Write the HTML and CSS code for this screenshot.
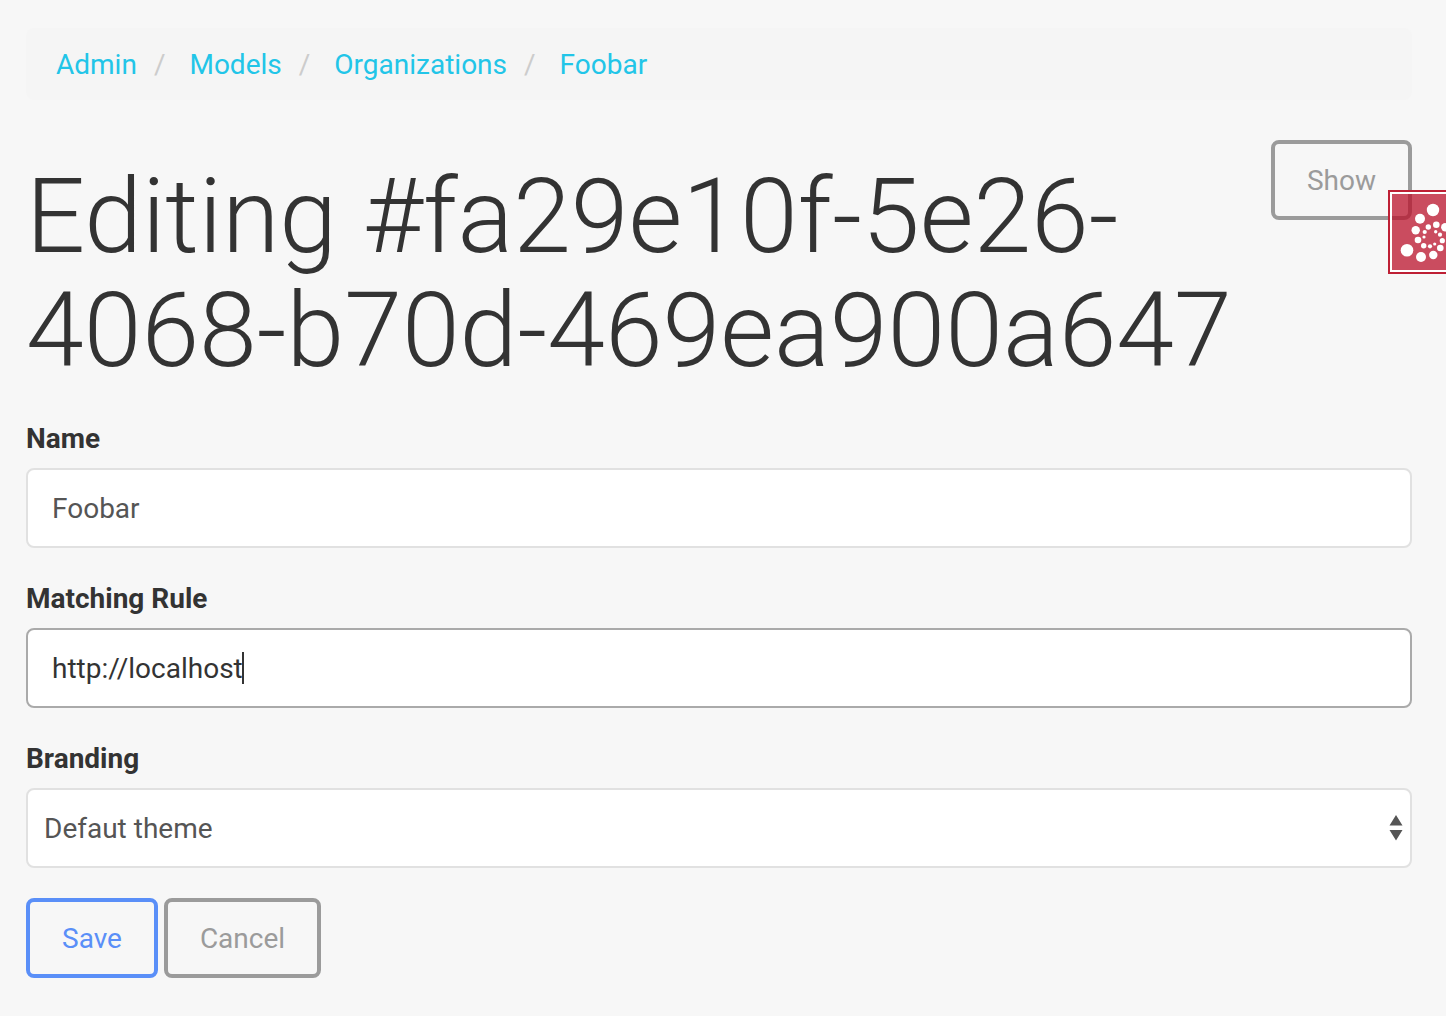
FILE: index.html
```html
<!DOCTYPE html>
<html lang="en">
<head>
<meta charset="utf-8">
<meta name="viewport" content="width=device-width, initial-scale=1">
<title>Editing organization</title>
<link rel="stylesheet" href="styles.css">
</head>
<body>
<main class="page">
  <nav aria-label="Breadcrumb">
    <ol class="breadcrumb">
      <li><a href="#">Admin</a></li>
      <li><a href="#">Models</a></li>
      <li><a href="#">Organizations</a></li>
      <li><a href="#">Foobar</a></li>
    </ol>
  </nav>
  <header class="heading">
    <h1>Editing #fa29e10f-5e26-4068-b70d-469ea900a647</h1>
    <button type="button" class="btn">Show</button>
  </header>
  <form>
    <div class="field">
      <label for="name">Name</label>
      <input class="control" id="name" type="text" value="Foobar">
    </div>
    <div class="field">
      <label for="rule">Matching Rule</label>
      <div class="control-wrap">
        <input class="control active" id="rule" type="text" value="http://localhost">
        <span class="caret"></span>
      </div>
    </div>
    <div class="field">
      <label for="branding">Branding</label>
      <div class="control-wrap">
        <select class="control" id="branding"><option>Defaut theme</option></select>
        <svg class="arrows" viewBox="0 0 14 26" aria-hidden="true"><path d="M7 0l6.500 10.500H.5zM.5 15h13L7 25.500z"/></svg>
      </div>
    </div>
    <div class="actions">
      <button type="button" class="btn btn-primary">Save</button>
      <button type="button" class="btn">Cancel</button>
    </div>
  </form>
</main>
<div class="badge-rail">
  <div class="badge">
    <svg viewBox="0 0 76 76" aria-hidden="true">
      <circle cx="41" cy="16" r="6.200"/><circle cx="28" cy="24.700" r="5"/>
      <circle cx="23.700" cy="36.300" r="4.200"/><circle cx="26" cy="46" r="3.300"/>
      <circle cx="31.700" cy="51.700" r="2.700"/><circle cx="38" cy="52.300" r="2.100"/>
      <circle cx="42.700" cy="50" r="1.600"/><circle cx="15" cy="56.300" r="6.300"/>
      <circle cx="29" cy="63" r="5"/><circle cx="41.300" cy="61" r="4.200"/>
      <circle cx="48.300" cy="54" r="3.300"/><circle cx="50.300" cy="46.700" r="2.600"/>
      <circle cx="48" cy="40.700" r="2.100"/><circle cx="43.700" cy="37.700" r="1.700"/>
      <circle cx="32" cy="43" r="1.600"/><circle cx="32.700" cy="38" r="2.100"/>
      <circle cx="36.300" cy="33" r="2.700"/><circle cx="44.300" cy="30.700" r="3.300"/>
      <circle cx="53.300" cy="33.300" r="4.200"/>
    </svg>
  </div>
</div>
</body>
</html>
```
FILE: styles.css
```css
* { box-sizing: border-box; }
body {
  margin: 0;
  background: #f7f7f7;
  color: #333;
  font: 28px/40px Roboto, sans-serif;
}
.page { padding: 28px 34px 38px 26px; }
.breadcrumb {
  display: flex;
  flex-wrap: wrap;
  margin: 0 0 40px;
  padding: 17px 30px 15px;
  border-radius: 8px;
  background: #f5f5f5;
  list-style: none;
}
.breadcrumb li + li::before {
  content: "/";
  margin: 0 24px 0 17px;
  color: #ccc;
}
.breadcrumb a { color: #22c5e8; text-decoration: none; }
.heading {
  display: flex;
  align-items: flex-start;
  justify-content: space-between;
  margin-bottom: 30px;
}
h1 {
  flex: 1;
  margin: 20px 0 0;
  font-size: 104px;
  font-weight: 300;
  line-height: 114px;
}
.btn {
  height: 80px;
  padding: 2px 32px 0;
  border: 4px solid #9b9b9b;
  border-radius: 8px;
  background: transparent;
  color: #9b9b9b;
  font: inherit;
}
.btn-primary { border-color: #5a8ff8; color: #5a8ff8; }
.field { margin-bottom: 30px; }
.field label { display: block; margin-bottom: 8px; font-weight: 700; line-height: 42px; }
.control-wrap { position: relative; }
.control {
  display: block;
  width: 100%;
  height: 80px;
  padding: 0 24px;
  border: 2px solid #e1e1e1;
  border-radius: 8px;
  outline: none;
  background: #fff;
  color: #555;
  font: inherit;
}
.control.active { border-color: #aaa; color: #333; }
select.control { padding: 2px 16px 0; appearance: none; }
.caret {
  position: absolute;
  top: 24px;
  left: 216px;
  width: 2px;
  height: 32px;
  background: #333;
}
.arrows {
  position: absolute;
  top: 27px;
  right: 9px;
  width: 14px;
  height: 26px;
  fill: #555;
}
.actions { display: flex; gap: 6px; }
.badge-rail {
  position: absolute;
  top: 190px;
  right: 0;
  width: 58px;
  height: 84px;
  overflow: hidden;
}
.badge {
  width: 84px;
  height: 84px;
  border: 2px solid #be2035;
  padding: 2px;
  background: rgba(186, 16, 42, .74) content-box;
  box-shadow: inset 0 0 0 2px #fff;
}
.badge svg { display: block; width: 76px; height: 76px; fill: #fff; }
```
